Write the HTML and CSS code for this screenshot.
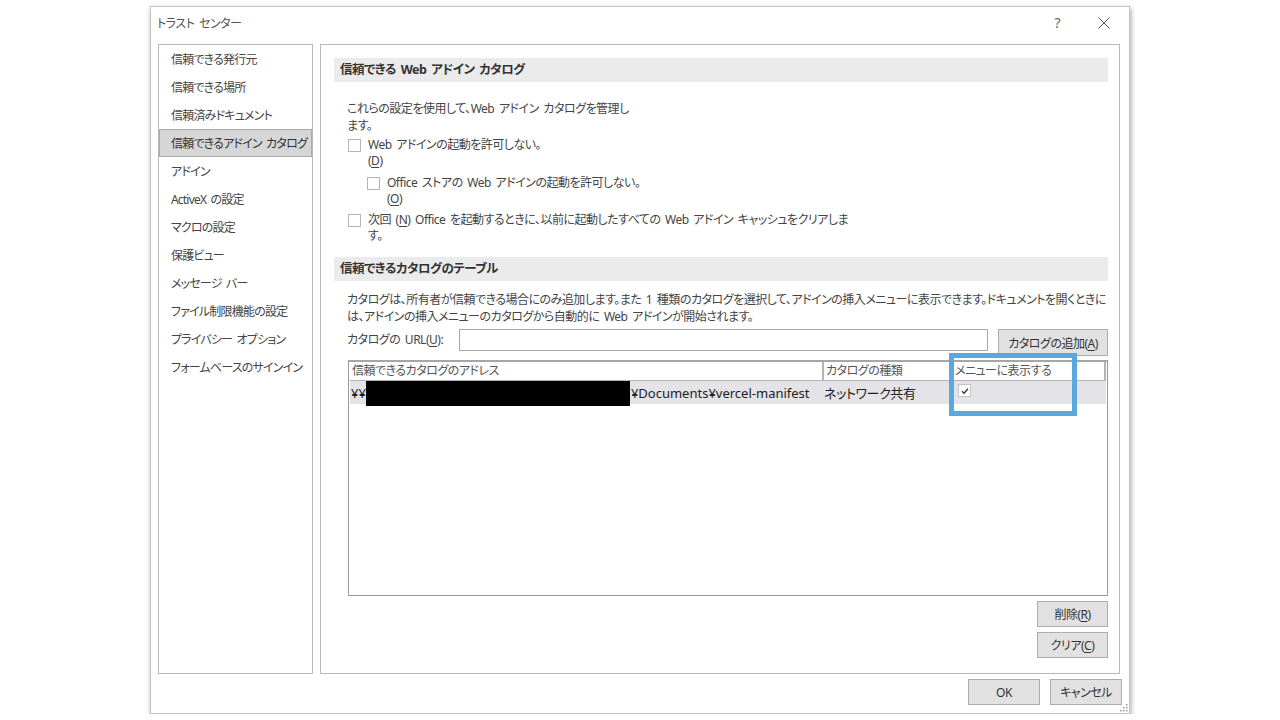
FILE: index.html
```html
<!DOCTYPE html>
<html lang="ja">
<head>
<meta charset="utf-8">
<title>トラスト センター</title>
<link rel="stylesheet" href="styles.css">
</head>
<body>
<div class="dialog">
  <div class="titlebar">
    <span class="title">トラスト センター</span>
    <div class="tb-icons">
      <span class="help">?</span>
      <svg class="close" width="12" height="12" viewBox="0 0 12 12"><path d="M0.5 0.5 L11.5 11.5 M11.5 0.5 L0.5 11.5" stroke="#555" stroke-width="1" fill="none"/></svg>
    </div>
  </div>
  <div class="body">
    <nav class="nav">
      <div class="nav-item">信頼できる発行元</div>
      <div class="nav-item">信頼できる場所</div>
      <div class="nav-item">信頼済みドキュメント</div>
      <div class="nav-item selected">信頼できるアドイン カタログ</div>
      <div class="nav-item">アドイン</div>
      <div class="nav-item">ActiveX の設定</div>
      <div class="nav-item">マクロの設定</div>
      <div class="nav-item">保護ビュー</div>
      <div class="nav-item">メッセージ バー</div>
      <div class="nav-item">ファイル制限機能の設定</div>
      <div class="nav-item">プライバシー オプション</div>
      <div class="nav-item">フォームベースのサインイン</div>
    </nav>
    <main class="panel">
      <div class="sec-head">信頼できる Web アドイン カタログ</div>
      <div class="sec1">
        <p class="desc">これらの設定を使用して、Web アドイン カタログを管理し<br>ます。</p>
        <div class="cb-row r1"><span class="cb"></span><div class="cb-label">Web アドインの起動を許可しない。<br>(<u>D</u>)</div></div>
        <div class="cb-row sub"><span class="cb"></span><div class="cb-label">Office ストアの Web アドインの起動を許可しない。<br>(<u>O</u>)</div></div>
        <div class="cb-row r3"><span class="cb"></span><div class="cb-label">次回 (<u>N</u>) Office を起動するときに、以前に起動したすべての Web アドイン キャッシュをクリアしま<br>す。</div></div>
      </div>
      <div class="sec-head second">信頼できるカタログのテーブル</div>
      <div class="sec2">
        <p class="desc d2">カタログは、所有者が信頼できる場合にのみ追加します。また 1 種類のカタログを選択して、アドインの挿入メニューに表示できます。ドキュメントを開くときに<br>は、アドインの挿入メニューのカタログから自動的に Web アドインが開始されます。</p>
        <div class="url-row">
          <span class="url-label">カタログの URL(<u>U</u>):</span>
          <span class="url-input"></span>
          <button class="btn add">カタログの追加(<u>A</u>)</button>
        </div>
        <div class="table">
          <div class="thead">
            <div class="th c1">信頼できるカタログのアドレス</div>
            <div class="th c2">カタログの種類</div>
            <div class="th c3">メニューに表示する</div>
          </div>
          <div class="trow">
            <div class="td c1">¥¥<span class="redact"></span>¥Documents¥vercel-manifest</div>
            <div class="td c2">ネットワーク共有</div>
            <div class="td c3"><span class="tcb"><svg width="10" height="10" viewBox="0 0 10 10"><path d="M2 5.2 L4 7.2 L8 2.8" stroke="#333" stroke-width="1.3" fill="none"/></svg></span></div>
          </div>
          <div class="highlight"></div>
        </div>
        <div class="side-btns">
          <button class="btn side">削除(<u>R</u>)</button>
          <button class="btn side">クリア(<u>C</u>)</button>
        </div>
      </div>
    </main>
  </div>
  <div class="footer">
    <button class="btn foot">OK</button>
    <button class="btn foot">キャンセル</button>
    <svg class="grip" width="9" height="9" viewBox="0 0 9 9"><g fill="#9a9a9a"><rect x="7" y="1" width="1.5" height="1.5"/><rect x="4" y="4" width="1.5" height="1.5"/><rect x="7" y="4" width="1.5" height="1.5"/><rect x="1" y="7" width="1.5" height="1.5"/><rect x="4" y="7" width="1.5" height="1.5"/><rect x="7" y="7" width="1.5" height="1.5"/></g></svg>
  </div>
</div>
</body>
</html>
```
FILE: styles.css
```css
* { box-sizing: border-box; }
html, body { margin: 0; padding: 0; background: #fff; }
body {
  font-family: "Noto Sans", "Noto Sans CJK JP", sans-serif;
  font-size: 12px;
  color: #444;
  font-feature-settings: "palt" 1;
  letter-spacing: -0.5px;
  word-spacing: 2px;
}
u { text-decoration: underline; text-underline-offset: 2px; }

.dialog {
  margin: 6px 0 0 150px;
  width: 980px;
  height: 708px;
  background: #fff;
  border: 1px solid #c4c4c4;
  box-shadow: 1px 2px 5px rgba(0,0,0,0.35);
  display: flex;
  flex-direction: column;
  position: relative;
}

.titlebar {
  height: 37px;
  display: flex;
  align-items: center;
  justify-content: space-between;
  padding: 0 19px 0 6px;
}
.title { color: #555; font-size: 12px; margin-top: -6px; }
.tb-icons { display: flex; align-items: center; gap: 38px; margin-top: -6px; }
.help { color: #666; font-size: 14px; font-family: "Noto Sans", sans-serif; }
.close { display: block; }

.body {
  display: flex;
  gap: 7px;
  padding: 0 9px 0 7px;
  height: 630px;
}

.nav {
  width: 155px;
  flex: none;
  height: 630px;
  border: 1px solid #b9b9b9;
  display: flex;
  flex-direction: column;
  overflow: hidden;
}
.nav-item {
  height: 28px;
  line-height: 28px;
  padding-left: 11px;
  white-space: nowrap;
  color: #444;
  border: 1px solid transparent;
  letter-spacing: -0.8px;
  word-spacing: 2px;
}
.nav-item.selected {
  background: #d6d6d6;
  border-color: #ababab;
  color: #333;
}

.panel {
  flex: 1;
  min-width: 0;
  height: 630px;
  border: 1px solid #b9b9b9;
  padding: 13px 11px 0 13px;
  display: flex;
  flex-direction: column;
}

.sec-head {
  height: 24px;
  line-height: 24px;
  background: #ebebeb;
  padding-left: 6px;
  font-weight: bold;
  font-size: 12.5px;
  color: #333;
}
.sec-head.second { margin-top: 13px; }

.sec1, .sec2 { padding-left: 13px; }

.desc {
  margin: 18px 0 0 0;
  line-height: 17px;
  white-space: nowrap;
}
.desc.d2 { margin-top: 10px; }

.cb-row {
  display: flex;
  align-items: flex-start;
  line-height: 16px;
  white-space: nowrap;
}
.cb-row.r1 { margin-top: 3px; }
.cb-row.sub { margin-top: 6px; padding-left: 19px; }
.cb-row.r3 { margin-top: 5px; }
.cb {
  width: 13px;
  height: 13px;
  border: 1px solid #b5b5b5;
  background: #fff;
  margin: 2px 7px 0 1px;
  flex: none;
}

.url-row {
  margin-top: 4px;
  display: flex;
  align-items: flex-start;
}
.url-label {
  width: 112px;
  flex: none;
  line-height: 22px;
  white-space: nowrap;
}
.url-input {
  flex: 1;
  height: 22px;
  border: 1px solid #a9a9a9;
  background: #fff;
  margin-right: 10px;
}
.btn {
  font-family: inherit;
  font-size: 12px;
  font-feature-settings: "palt" 1;
  letter-spacing: -0.5px;
  color: #333;
  background: #e1e1e1;
  border: 1px solid #adadad;
  padding: 0;
  white-space: nowrap;
}
.btn.add { width: 110px; height: 27px; flex: none; }

.table {
  position: relative;
  margin: 4px 0 0 1px;
  height: 236px;
  border: 1px solid #9a9a9a;
  border-top: 2px solid #a6a6a6;
  background: #fff;
  padding: 0 1px;
}
.thead {
  display: flex;
  height: 19px;
  gap: 2px;
  background: #b4b4b4;
  padding-bottom: 1px;
}
.th {
  background: #fff;
  line-height: 18px;
  padding-left: 2px;
  color: #555;
  white-space: nowrap;
}
.c1 { width: 472px; flex: none; }
.c2 { width: 127px; flex: none; }
.c3 { flex: 1; }
.th.c3 { border-right: 2px solid #b4b4b4; }

.trow {
  display: flex;
  height: 23px;
  background: #e3e3e8;
}
.td {
  display: flex;
  align-items: center;
  white-space: nowrap;
  color: #222;
  font-size: 13px;
  letter-spacing: 0;
}
.td.c1 { padding-left: 1px; width: 474px; }
.td.c2 { padding-left: 0; width: 127px; letter-spacing: -0.4px; }
.td.c3 { padding-left: 7px; align-items: flex-start; padding-top: 3px; }
.redact {
  display: inline-block;
  width: 264px;
  height: 25px;
  background: #000;
  align-self: flex-start;
  margin-right: 1px;
}
.tcb {
  width: 13px;
  height: 13px;
  background: #fff;
  border: 1px solid #c4c4c4;
  display: flex;
  align-items: center;
  justify-content: center;
}
.tcb svg { display: block; }

.highlight {
  position: absolute;
  left: 600px;
  top: -9px;
  width: 128px;
  height: 63px;
  border: 5px solid #5ba8e0;
}

.side-btns {
  margin-top: 5px;
  display: flex;
  flex-direction: column;
  align-items: flex-end;
  gap: 5px;
}
.btn.side { width: 71px; height: 26px; }

.footer {
  flex: 1;
  display: flex;
  justify-content: flex-end;
  align-items: flex-start;
  gap: 10px;
  padding: 5px 7px 0 0;
  position: relative;
}
.btn.foot { width: 72px; height: 26px; }
.grip { position: absolute; right: 1px; bottom: 1px; }
```
